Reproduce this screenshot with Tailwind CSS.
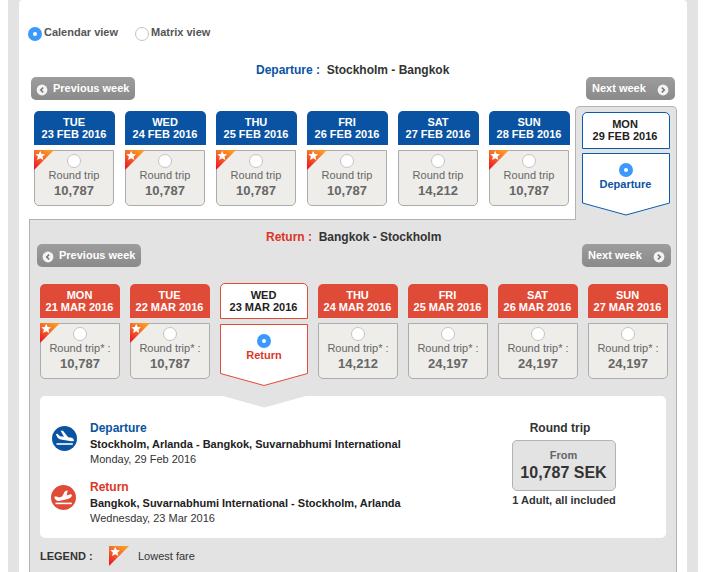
<!DOCTYPE html>
<html lang="en">
<head>
    <meta charset="UTF-8">
    <meta name="viewport" content="width=device-width, initial-scale=1.0">
    <title>Select your flights</title>
    <script src="https://cdn.jsdelivr.net/npm/@tailwindcss/browser@4"></script>
</head>
<body class="bg-white overflow-hidden font-['Liberation_Sans',Arial,sans-serif] text-[11px] text-[#333]">
    <!-- Shared shapes -->
    <svg class="absolute w-0 h-0">
        <defs>
            <linearGradient id="fare" x1="0.7" y1="0" x2="0.1" y2="0.9">
                <stop offset="0" stop-color="#fb9a24" />
                <stop offset="0.45" stop-color="#f4682a" />
                <stop offset="1" stop-color="#ec1c24" />
            </linearGradient>
            <symbol id="lowest" viewBox="0 0 20 20">
                <path d="M0 0H20L0 20Z" fill="url(#fare)" />
                <path d="M6.2 .8 7.6 4 11.1 4.3 8.5 6.6 9.3 10 6.2 8.2 3.1 10 3.9 6.6 1.3 4.3 4.8 4Z" fill="#fff" />
            </symbol>
            <symbol id="chevron" viewBox="0 0 12 12">
                <circle cx="6" cy="6" r="5.4" fill="#f4f4f4" />
                <path d="M4.8 3.6 7.3 6 4.8 8.4" fill="none" stroke="#777" stroke-width="1.5" />
            </symbol>
        </defs>
    </svg>

    <div class="ml-2 w-[690px] h-[572px] px-[11px] bg-[#e3e3e3]">
        <div class="h-full px-[10px] rounded-t-[4px] bg-white">
            <!-- View switch -->
            <div class="flex pt-[26px] h-[63px] font-bold text-[#555] leading-[12px]">
                <label class="flex w-[106px]">
                    <span class="w-[14px] h-[14px] mt-px -ml-px mr-[2px] rounded-full border-[5px] border-[#3b99fc] bg-white"></span>
                    Calendar view
                </label>
                <label class="flex">
                    <span class="w-[14px] h-[14px] mt-px mr-[2px] rounded-full border border-[#c4c4c4] bg-white"></span>
                    Matrix view
                </label>
            </div>

            <!-- Departure week -->
            <h2 class="h-[14px] leading-[14px] pl-[227px] text-[12px] font-bold whitespace-pre"><span class="text-[#0a53a3]">Departure :</span>  Stockholm - Bangkok</h2>
            <div class="flex justify-between px-[2px] h-[29px] font-bold text-white">
                <button class="flex items-center w-[104px] h-[23px] pl-[5px] rounded-[5px] bg-linear-to-b from-[#9d9d9d] to-[#8a8a8a]">
                    <svg class="w-3 h-3 mt-[2px] mr-[5px] rotate-180"><use href="#chevron" /></svg>Previous week
                </button>
                <button class="flex items-center justify-between w-[89px] h-[23px] px-[6px] rounded-[5px] bg-linear-to-b from-[#9d9d9d] to-[#8a8a8a]">
                    Next week<svg class="w-3 h-3 mt-[2px]"><use href="#chevron" /></svg>
                </button>
            </div>
            <div class="flex justify-between h-[113px] pl-[5px]">
                <div id="departureDays" class="flex gap-[10px] pt-[5px]"></div>
                <div class="relative z-10 w-[102px] h-[114px] pt-[5px] pl-[6px] rounded-t-[5px] border border-b-0 border-[#b2b2b2] bg-[#e3e3e3]">
                    <div class="w-[88px] h-[37px] pt-[5px] pr-[2px] rounded-t-[5px] border border-[#0a5cb0] bg-white text-center font-bold leading-[12px] text-[#222]">MON<br>29 FEB 2016</div>
                    <div class="relative w-[88px] h-[63px] mt-[4px]">
                        <svg class="absolute inset-0 w-[88px] h-[63px]"><path d="M.5 .5H87.5V50L44 62 .5 50Z" fill="#fff" stroke="#0a5cb0" /></svg>
                        <div class="relative flex flex-col items-center pt-[10px] pr-px font-bold text-[#0a53a3]">
                            <span class="w-[14px] h-[14px] rounded-full border-[5px] border-[#3b99fc] bg-white"></span>
                            <span class="leading-[14px]">Departure</span>
                        </div>
                    </div>
                </div>
            </div>

            <!-- Return week -->
            <div class="h-[353px] pt-[10px] border border-b-0 border-[#b2b2b2] bg-[#e3e3e3]">
                <h2 class="h-[14px] leading-[14px] pl-[236px] text-[12px] font-bold whitespace-pre"><span class="text-[#dd3627]">Return :</span>  Bangkok - Stockholm</h2>
                <div class="flex justify-between pl-[7px] pr-[5px] h-[40px] font-bold text-white">
                    <button class="flex items-center w-[104px] h-[23px] pl-[5px] rounded-[5px] bg-linear-to-b from-[#9d9d9d] to-[#8a8a8a]">
                        <svg class="w-3 h-3 mt-[2px] mr-[5px] rotate-180"><use href="#chevron" /></svg>Previous week
                    </button>
                    <button class="flex items-center justify-between w-[89px] h-[23px] px-[6px] rounded-[5px] bg-linear-to-b from-[#9d9d9d] to-[#8a8a8a]">
                        Next week<svg class="w-3 h-3 mt-[2px]"><use href="#chevron" /></svg>
                    </button>
                </div>
                <div id="returnDays" class="flex gap-[10px] pl-[10px] h-[112px]"></div>

                <!-- Trip summary -->
                <div class="relative flex ml-[10px] w-[626px] h-[142px] rounded-[5px] bg-white">
                    <svg class="absolute left-[180px] top-0 w-[90px] h-3"><path d="M3 0H86L44.5 11.5Z" fill="#e3e3e3" /></svg>
                    <div class="w-[472px] pt-[25px] pl-[12px]">
                        <div class="flex h-[59px]">
                            <svg class="w-[25px] h-[25px] mt-[5px] mr-[13px]" viewBox="0 0 25 25">
                                <circle cx="12.5" cy="12.5" r="12.5" fill="#0a53a3" />
                                <path d="M4 8 5.4 7.8 8 10.2 12 10.8 8.6 4.8 11 4.8 16.2 11.2 20 11.8Q22 12.6 22 15L19.5 15.3 8.7 13.6Q4.6 12 4 8Z" fill="#fff" />
                                <path d="M4.5 18H20.8" stroke="#fff" stroke-width="1.6" />
                            </svg>
                            <div>
                                <h3 class="text-[12px] font-bold leading-[14px] text-[#0a53a3]">Departure</h3>
                                <p class="mt-[2px] font-bold leading-[15px] text-[#222]">Stockholm, Arlanda - Bangkok, Suvarnabhumi International</p>
                                <p class="leading-[15px]">Monday, 29 Feb 2016</p>
                            </div>
                        </div>
                        <div class="flex">
                            <svg class="w-[25px] h-[25px] mt-[5px] -ml-px mr-[14px]" viewBox="0 0 25 25">
                                <circle cx="12.5" cy="12.5" r="12.5" fill="#e04b38" />
                                <path d="M3.2 12 4.8 11.2 8 12.6 11 11.4 14 6.2 16.8 5.2 15.6 10.4 18.6 9.4Q20.8 9 21 10.6 20.6 12.8 17 14L8 16Q4.2 15.8 3.2 12Z" fill="#fff" />
                                <path d="M4.5 18.4H20.8" stroke="#fff" stroke-width="1.6" />
                            </svg>
                            <div>
                                <h3 class="text-[12px] font-bold leading-[14px] text-[#dd3627]">Return</h3>
                                <p class="mt-[2px] font-bold leading-[15px] text-[#222]">Bangkok, Suvarnabhumi International - Stockholm, Arlanda</p>
                                <p class="leading-[15px]">Wednesday, 23 Mar 2016</p>
                            </div>
                        </div>
                    </div>
                    <div class="w-[104px] pt-[25px] text-center font-bold">
                        <h3 class="pr-[8px] text-[12px] leading-[14px]">Round trip</h3>
                        <div class="mt-[5px] h-[51px] pt-[8px] pr-px rounded-[5px] border border-[#b2b2b2] bg-[#e3e3e3]">
                            <div class="leading-[13px] text-[#666]">From</div>
                            <div class="text-[16px] leading-[21px]">10,787 SEK</div>
                        </div>
                        <div class="mt-[3px] leading-[13px] whitespace-nowrap">1 Adult, all included</div>
                    </div>
                </div>

                <div class="flex pt-[8px] pl-[10px] leading-[20px]">
                    <span class="w-[69px] font-bold">LEGEND :</span>
                    <svg class="w-5 h-5 mr-[9px]"><use href="#lowest" /></svg>
                    <span>Lowest fare</span>
                </div>
            </div>
        </div>
    </div>

    <script>
        const departures = [
            { day: 'TUE', date: '23 FEB 2016', price: '10,787', lowest: true },
            { day: 'WED', date: '24 FEB 2016', price: '10,787', lowest: true },
            { day: 'THU', date: '25 FEB 2016', price: '10,787', lowest: true },
            { day: 'FRI', date: '26 FEB 2016', price: '10,787', lowest: true },
            { day: 'SAT', date: '27 FEB 2016', price: '14,212' },
            { day: 'SUN', date: '28 FEB 2016', price: '10,787', lowest: true },
        ];
        const returns = [
            { day: 'MON', date: '21 MAR 2016', price: '10,787', lowest: true },
            { day: 'TUE', date: '22 MAR 2016', price: '10,787', lowest: true },
            { day: 'WED', date: '23 MAR 2016', selected: true },
            { day: 'THU', date: '24 MAR 2016', price: '14,212' },
            { day: 'FRI', date: '25 MAR 2016', price: '24,197' },
            { day: 'SAT', date: '26 MAR 2016', price: '24,197' },
            { day: 'SUN', date: '27 MAR 2016', price: '24,197' },
        ];

        function dayCell(item, head, label) {
            return `
                <div>
                    <div class="${head} h-[34px] pt-[5px] pr-px rounded-t-[5px] text-center font-bold leading-[12px] text-white">${item.day}<br>${item.date}</div>
                    <div class="relative flex flex-col items-center w-[80px] h-[56px] mt-[5px] pt-[3px] rounded-b-[5px] border border-[#acacac] bg-[#eeede9] text-[#666]">
                        ${item.lowest ? '<svg class="absolute -left-px -top-px w-5 h-5"><use href="#lowest" /></svg>' : ''}
                        <span class="w-[14px] h-[14px] rounded-full border border-[#c4c4c4] bg-white"></span>
                        <span class="leading-[14px]">${label}</span>
                        <span class="text-[13px] font-bold leading-[17px]">${item.price}</span>
                    </div>
                </div>`;
        }

        function selectedReturn(item) {
            return `
                <div class="-mt-px">
                    <div class="w-[88px] h-[36px] pt-[5px] pr-px rounded-t-[5px] border border-[#e04b38] bg-white text-center font-bold leading-[12px] text-[#222]">${item.day}<br>${item.date}</div>
                    <div class="relative w-[88px] h-[63px] mt-[5px]">
                        <svg class="absolute inset-0 w-[88px] h-[63px]"><path d="M.5 .5H87.5V49.5L44 61.5 .5 49.5Z" fill="#fff" stroke="#e04b38" /></svg>
                        <div class="relative flex flex-col items-center pt-[10px] font-bold text-[#dd3627]">
                            <span class="w-[14px] h-[14px] rounded-full border-[5px] border-[#3b99fc] bg-white"></span>
                            <span class="leading-[14px]">Return</span>
                        </div>
                    </div>
                </div>`;
        }

        document.getElementById('departureDays').innerHTML = departures
            .map(item => dayCell(item, 'bg-[#0a53a3] w-[81px]', 'Round trip')).join('');
        document.getElementById('returnDays').innerHTML = returns
            .map(item => item.selected ? selectedReturn(item) : dayCell(item, 'bg-[#e04b38] w-[80px]', 'Round trip* :')).join('');
    </script>
</body>
</html>
